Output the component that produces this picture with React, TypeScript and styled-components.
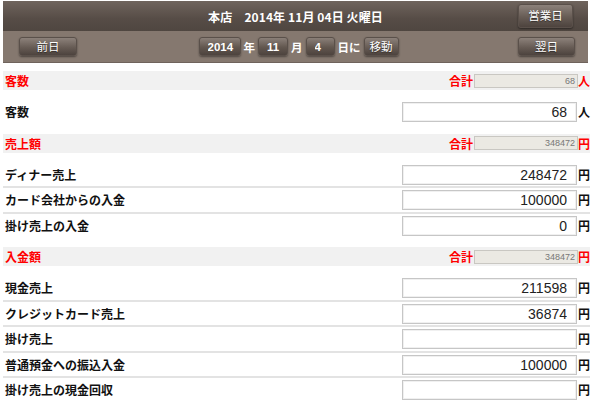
import React from "react";
import styled, { createGlobalStyle } from "styled-components";

const GlobalStyle = createGlobalStyle`
  body {
    margin: 0;
    background: #fff;
    font-family: "Noto Sans CJK JP", "Liberation Sans", sans-serif;
  }
`;

const Page = styled.div`
  padding: 1px 1px 0 3px;
  width: 591px;
  box-sizing: border-box;
`;

const Header = styled.div`
  margin-right: 2px;
  margin-bottom: 8px;
`;

const TopBar = styled.div`
  height: 30px;
  display: grid;
  grid-template-columns: 1fr auto 1fr;
  align-items: center;
  background: linear-gradient(#6f645d, #564c46 60%, #4f4640);
`;

const Title = styled.div`
  grid-column: 2;
  color: #fff;
  font-weight: 700;
  font-size: 12px;
  letter-spacing: 0.1px;
  white-space: pre;
`;

const TopRight = styled.div`
  grid-column: 3;
  display: flex;
  justify-content: flex-end;
  padding-right: 15px;
`;

const SubBar = styled.div`
  height: 31px;
  display: flex;
  align-items: center;
  justify-content: space-between;
  padding: 0 13px 0 16px;
  background: #85786f;
  border-bottom: 1px solid #6f635c;
`;

const Btn = styled.button<{ $w: number; $h?: number }>`
  width: ${(p) => p.$w}px;
  height: ${(p) => p.$h ?? 19}px;
  padding: 0;
  border: 1px solid #5a504a;
  border-radius: 3px;
  background: linear-gradient(#8c817a, #675c55 55%, #4d433e);
  box-shadow: 0 1px 2px rgba(0, 0, 0, 0.45);
  color: #fff;
  font-family: "Noto Sans CJK JP", sans-serif;
  font-size: 11.5px;
  font-weight: 400;
  text-shadow: 0 1px 1px rgba(0, 0, 0, 0.5);
  line-height: 1;
`;

const Jump = styled.div`
  display: flex;
  align-items: center;
  color: #fff;
  font-size: 11.5px;
  font-weight: 700;
  margin-left: 2px;
`;

const DarkInput = styled.input<{ $w: number }>`
  width: ${(p) => p.$w}px;
  height: 19px;
  box-sizing: border-box;
  padding: 0 0 0 8px;
  margin: 0;
  border: 1px solid #5a504a;
  border-radius: 3px;
  background: linear-gradient(#8a7f78, #62574f 55%, #4d433e);
  box-shadow: 0 1px 2px rgba(0, 0, 0, 0.4);
  color: #fff;
  font-family: "Liberation Sans", sans-serif;
  font-weight: 700;
  font-size: 11.5px;
  outline: none;
`;

const JumpText = styled.span`
  margin: 0 3px;
`;

const SectionHead = styled.div`
  height: 19px;
  display: flex;
  align-items: center;
  justify-content: space-between;
  background: #f1f1f1;
  padding-left: 2px;
  color: #ff0000;
  font-size: 12px;
  font-weight: 700;
`;

const Total = styled.div`
  display: flex;
  align-items: center;
`;

const TotalLabel = styled.span`
  margin-right: 1px;
`;

const TotalBox = styled.div`
  width: 104px;
  height: 14px;
  box-sizing: border-box;
  border: 1px solid #c9c7c2;
  background: #ebe9e3;
  color: #777;
  font-family: "Liberation Sans", sans-serif;
  font-weight: 400;
  font-size: 9px;
  line-height: 12px;
  text-align: right;
  padding-right: 2px;
`;

const Unit = styled.span<{ $red?: boolean }>`
  width: 12px;
  text-align: right;
  color: ${(p) => (p.$red ? "#ff0000" : "#111")};
  font-weight: 700;
  font-size: 12px;
`;

const Group = styled.div`
  padding: 10px 0;
`;

const Row = styled.div`
  display: flex;
  align-items: center;
  height: 21.5px;
  padding: 2px 0 0 2px;
  box-sizing: content-box;
  border-bottom: 2px solid #e3e3e3;
  &:last-child {
    border-bottom: none;
  }
`;

const Label = styled.div`
  flex: 1;
  color: #111;
  font-size: 12px;
  font-weight: 700;
  margin-top: -2px;
`;

const Field = styled.input`
  width: 175px;
  height: 20px;
  box-sizing: border-box;
  align-self: flex-start;
  margin: 0 1px 0 0;
  border: 1px solid #c6c6c6;
  box-shadow: inset 0 0 0 1px #f0f0f0;
  padding: 0 9px 0 4px;
  text-align: right;
  font-family: "Liberation Sans", sans-serif;
  font-size: 14px;
  color: #222;
  outline: none;
`;

const RowUnit = styled(Unit)`
  margin-top: -2px;
`;

type Item = { label: string; value: string };
type Section = { title: string; total: string; unit: string; items: Item[] };

const sections: Section[] = [
  { title: "客数", total: "68", unit: "人", items: [{ label: "客数", value: "68" }] },
  {
    title: "売上額",
    total: "348472",
    unit: "円",
    items: [
      { label: "ディナー売上", value: "248472" },
      { label: "カード会社からの入金", value: "100000" },
      { label: "掛け売上の入金", value: "0" },
    ],
  },
  {
    title: "入金額",
    total: "348472",
    unit: "円",
    items: [
      { label: "現金売上", value: "211598" },
      { label: "クレジットカード売上", value: "36874" },
      { label: "掛け売上", value: "" },
      { label: "普通預金への振込入金", value: "100000" },
      { label: "掛け売上の現金回収", value: "" },
    ],
  },
];

export default function App() {
  return (
    <Page>
      <GlobalStyle />
      <Header>
        <TopBar>
          <Title>{"本店　2014年 11月 04日 火曜日"}</Title>
          <TopRight>
            <Btn $w={55} $h={24}>営業日</Btn>
          </TopRight>
        </TopBar>
        <SubBar>
          <Btn $w={58}>前日</Btn>
          <Jump>
            <DarkInput $w={42} defaultValue="2014" />
            <JumpText>年</JumpText>
            <DarkInput $w={30} defaultValue="11" />
            <JumpText>月</JumpText>
            <DarkInput $w={29} defaultValue="4" />
            <JumpText>日に</JumpText>
            <Btn $w={35}>移動</Btn>
          </Jump>
          <Btn $w={57}>翌日</Btn>
        </SubBar>
      </Header>
      {sections.map((s) => (
        <React.Fragment key={s.title}>
          <SectionHead>
            <span>{s.title}</span>
            <Total>
              <TotalLabel>合計</TotalLabel>
              <TotalBox>{s.total}</TotalBox>
              <Unit $red>{s.unit}</Unit>
            </Total>
          </SectionHead>
          <Group>
            {s.items.map((it) => (
              <Row key={it.label}>
                <Label>{it.label}</Label>
                <Field defaultValue={it.value} />
                <RowUnit>{s.unit}</RowUnit>
              </Row>
            ))}
          </Group>
        </React.Fragment>
      ))}
    </Page>
  );
}
